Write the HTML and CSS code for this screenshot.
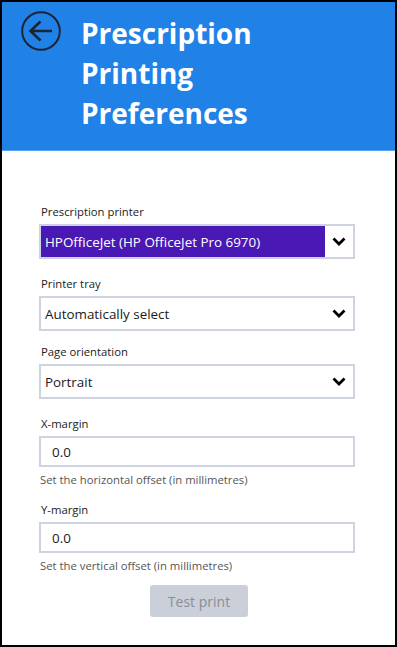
FILE: index.html
```html
<!DOCTYPE html>
<html lang="en">
<head>
    <meta charset="UTF-8">
    <meta name="viewport" content="width=device-width, initial-scale=1.0">
    <title>Prescription Printing Preferences</title>
    <link rel="stylesheet" href="styles.css">
</head>
<body>

    <!-- Window -->
    <div class="window">

        <!-- Header -->
        <header class="page-header">
            <button class="back-button" aria-label="Back">
                <svg width="40" height="40" viewBox="0 0 40 40">
                    <circle cx="20" cy="20" r="18.8" fill="none" stroke="#1c2333" stroke-width="2"/>
                    <path d="M19.5 10.5 L9.5 20 L19.5 29.5 M9.5 20 H31" fill="none" stroke="#1c2333" stroke-width="2.6" stroke-linecap="butt" stroke-linejoin="miter"/>
                </svg>
            </button>
            <h1>Prescription<br>Printing<br>Preferences</h1>
        </header>

        <!-- Preferences Form -->
        <main class="prefs-form">
            <div class="field">
                <label>Prescription printer</label>
                <div class="select-box">
                    <span class="select-value selected">HPOfficeJet (HP OfficeJet Pro 6970)</span>
                    <span class="chevron"><svg width="14" height="9" viewBox="0 0 14 9"><path d="M1.5 1.5 L7 7 L12.5 1.5" fill="none" stroke="#000" stroke-width="2.8"/></svg></span>
                </div>
            </div>

            <div class="field field--tight">
                <label>Printer tray</label>
                <div class="select-box">
                    <span class="select-value">Automatically select</span>
                    <span class="chevron"><svg width="14" height="9" viewBox="0 0 14 9"><path d="M1.5 1.5 L7 7 L12.5 1.5" fill="none" stroke="#000" stroke-width="2.8"/></svg></span>
                </div>
            </div>

            <div class="field">
                <label>Page orientation</label>
                <div class="select-box">
                    <span class="select-value">Portrait</span>
                    <span class="chevron"><svg width="14" height="9" viewBox="0 0 14 9"><path d="M1.5 1.5 L7 7 L12.5 1.5" fill="none" stroke="#000" stroke-width="2.8"/></svg></span>
                </div>
            </div>

            <div class="field field--hinted">
                <label>X-margin</label>
                <input type="text" class="text-box" value="0.0">
                <p class="hint">Set the horizontal offset (in millimetres)</p>
            </div>

            <div class="field field--hinted">
                <label>Y-margin</label>
                <input type="text" class="text-box" value="0.0">
                <p class="hint">Set the vertical offset (in millimetres)</p>
            </div>

            <div class="button-row">
                <button class="test-button" disabled>Test print</button>
            </div>
        </main>
    </div>

</body>
</html>
```

FILE: styles.css
```css
/* Basic Reset */
* {
    margin: 0;
    padding: 0;
    box-sizing: border-box;
}

body {
    font-family: 'Open Sans', 'Noto Sans', sans-serif;
    background-color: #fff;
    color: #1a1a1a;
}

/* Window Frame */
.window {
    width: 397px;
    height: 647px;
    border: 2px solid #000;
    background-color: #fff;
}

/* Header */
.page-header {
    display: flex;
    align-items: flex-start;
    height: 149px;
    padding: 9px 0 0 19px;
    background-color: #2082e6;
    border-bottom: 1px solid #57a2ef;
}

.back-button {
    width: 40px;
    height: 40px;
    background: none;
    border: none;
    cursor: pointer;
}

.back-button svg {
    display: block;
}

.page-header h1 {
    margin: 2px 0 0 20px;
    font-size: 28px;
    font-weight: 700;
    line-height: 40px;
    color: #fff;
}

/* Form */
.prefs-form {
    padding: 53px 40px 0 37px;
}

.field {
    margin-bottom: 17px;
}

.field--tight {
    margin-bottom: 13px;
}

.field--hinted {
    margin-bottom: 14px;
}

.field label {
    display: block;
    padding-left: 2px;
    margin-bottom: 4px;
    font-size: 11.3px;
    line-height: 16px;
    color: #1a1a1a;
}

/* Select Boxes */
.select-box {
    display: flex;
    align-items: stretch;
    height: 35px;
    border: 2px solid #cdd3e0;
    background-color: #fff;
}

.select-value {
    flex: 1;
    display: flex;
    align-items: center;
    padding-left: 4px;
    font-size: 13.4px;
    color: #1a1a1a;
}

.select-value.selected {
    background-color: #4a18b5;
    color: #fff;
}

.chevron {
    width: 28px;
    display: flex;
    align-items: center;
    justify-content: center;
}

/* Text Boxes */
.text-box {
    display: block;
    width: 100%;
    height: 31px;
    padding-left: 11px;
    border: 2px solid #cdd3e0;
    font-family: inherit;
    font-size: 13.4px;
    color: #1a1a1a;
    outline: none;
}

.hint {
    margin-top: 5px;
    padding-left: 1px;
    font-size: 11.3px;
    line-height: 16px;
    color: #555;
}

/* Test Button */
.button-row {
    display: flex;
    justify-content: center;
    padding-left: 4px;
    margin-top: -3px;
}

.test-button {
    width: 98px;
    height: 32px;
    border: none;
    border-radius: 3px;
    background-color: #cbcfd8;
    color: #8a8e97;
    font-family: inherit;
    font-size: 14px;
}
```
